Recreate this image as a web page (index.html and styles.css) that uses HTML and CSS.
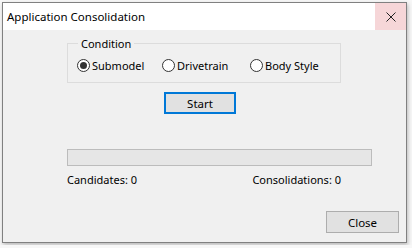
FILE: index.html
```html
<!DOCTYPE html>
<html lang="en">
<head>
    <meta charset="UTF-8">
    <title>Application Consolidation</title>
    <link rel="stylesheet" href="styles.css">
</head>
<body>
    <div class="window">
        <!-- Title bar -->
        <div class="title-bar">
            <span class="title">Application Consolidation</span>
            <span class="close-x">
                <svg width="10" height="10" viewBox="0 0 10 10">
                    <path d="M0.5 0.5 L9.5 9.5 M9.5 0.5 L0.5 9.5" stroke="#222" stroke-width="1"/>
                </svg>
            </span>
        </div>

        <div class="content">
            <fieldset class="group">
                <legend>Condition</legend>
                <label class="radio"><span class="dot checked"></span>Submodel</label>
                <label class="radio"><span class="dot"></span>Drivetrain</label>
                <label class="radio"><span class="dot"></span>Body Style</label>
            </fieldset>

            <div class="start-row">
                <button class="btn btn-start">Start</button>
            </div>

            <div class="progress"></div>

            <div class="counts">
                <span>Candidates: 0</span>
                <span>Consolidations: 0</span>
            </div>

            <div class="footer">
                <button class="btn btn-close">Close</button>
            </div>
        </div>
    </div>
</body>
</html>
```

FILE: styles.css
```css
body {
    margin: 0;
    padding: 2px;
    background-color: #f7f7f7;
    font-family: "Noto Sans", Arial, sans-serif;
    font-size: 11px;
    color: #000;
}

.window {
    width: 403px;
    height: 239px;
    border: 1px solid #808080;
    background-color: #f0f0f0;
    box-shadow: 1px 2px 4px rgba(0, 0, 0, 0.25);
    display: flex;
    flex-direction: column;
}

/* Title bar */
.title-bar {
    height: 27px;
    background-color: #fff;
    display: flex;
    align-items: center;
    justify-content: space-between;
}

.title {
    padding-left: 4px;
    font-size: 11.5px;
}

.close-x {
    width: 31px;
    height: 27px;
    background-color: #f6d6d8;
    display: flex;
    align-items: center;
    justify-content: center;
}

.content {
    flex: 1;
    padding: 0 33px 0 64px;
    display: flex;
    flex-direction: column;
}

/* Group box */
.group {
    margin: 6px 0 0 0;
    width: 274px;
    box-sizing: border-box;
    border: 1px solid #dcdcdc;
    padding: 7px 0 9px 9px;
    display: flex;
    align-items: center;
}

.group legend {
    padding: 0 3px;
    margin-left: 1px;
}

.radio {
    display: flex;
    align-items: center;
    gap: 2px;
}

.radio:nth-child(2) { width: 85px; }
.radio:nth-child(3) { width: 88px; }

.dot {
    width: 11px;
    height: 11px;
    border: 1px solid #333;
    border-radius: 50%;
    background-color: #fff;
    display: flex;
    align-items: center;
    justify-content: center;
}

.dot.checked::after {
    content: "";
    width: 7px;
    height: 7px;
    border-radius: 50%;
    background-color: #333;
}

/* Buttons */
.btn {
    font-family: "Noto Sans", Arial, sans-serif;
    font-size: 11.5px;
    background-color: #e1e1e1;
    border: 1px solid #adadad;
    padding: 0;
    box-sizing: border-box;
}

.start-row {
    margin-top: 9px;
    padding-left: 97px;
}

.btn-start {
    width: 72px;
    height: 22px;
    border: 2px solid #0078d7;
}

.progress {
    margin-top: 35px;
    width: 305px;
    height: 17px;
    box-sizing: border-box;
    border: 1px solid #bcbcbc;
    background-color: #e6e6e6;
}

.counts {
    margin-top: 6px;
    width: 274px;
    display: flex;
    justify-content: space-between;
}

.footer {
    margin-top: auto;
    display: flex;
    justify-content: flex-end;
    margin-right: -26px;
    padding-bottom: 9px;
}

.btn-close {
    width: 73px;
    height: 22px;
}
```
